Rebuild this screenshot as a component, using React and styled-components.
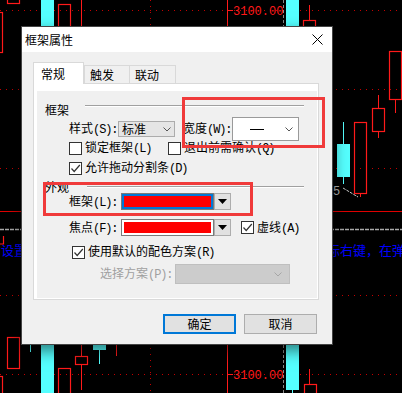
import React from "react";
import styled, { createGlobalStyle } from "styled-components";

const GlobalStyle = createGlobalStyle`
  html, body {
    margin: 0;
    padding: 0;
    background: #000;
  }
`;

const RED = "#ff1a1a";
const CYAN = "#55ffff";
const DOT = "#c40000";
const MARK = "#f03a3a";

const Screen = styled.div`
  position: relative;
  width: 402px;
  height: 393px;
  overflow: hidden;
  background: #000;
`;

const Canvas = styled.svg`
  position: absolute;
  left: 0;
  top: 0;
  display: block;
`;

// chart pieces: [x, y, w, h] / [x, y1, y2]
const redBoxes = [
  [-10, 12, 12, 40],
  [7, -5, 12, 8],
  [58, 4, 12, 60],
  [303, 20, 12, 20],
  [354, 122, 12, 71],
  [372, 108, 12, 23],
  [389, 51, 12, 48],
  [7, 337, 12, 31],
  [-10, 376, 12, 30],
  [58, 368, 12, 40],
  [75, 356, 12, 8],
  [304, 384, 12, 20],
];
const redWicks = [
  [81, 0, 30],
  [309, 5, 20],
  [360, 193, 197],
  [378, 95, 108],
  [378, 131, 138],
  [395, 99, 113],
  [81, 340, 356],
  [81, 364, 390],
  [116, 340, 356],
  [309, 369, 384],
];
const cyanBars = [
  [41, 0, 13, 393],
  [286, 0, 13, 390],
  [337, 144, 13, 33],
  [93, 340, 13, 10],
];
const cyanWicks = [
  [343, 122, 144],
  [343, 177, 184],
  [99, 350, 364],
  [30, 340, 352],
  [292, 390, 393],
];

const Chart = () => (
  <Canvas width="402" height="393" viewBox="0 0 402 393">
    {[10, 89, 168, 295, 374].map((y) => (
      <line key={y} x1="0" x2="402" y1={y + 0.5} y2={y + 0.5} stroke={DOT} strokeDasharray="1 5" />
    ))}
    <line x1="150.5" x2="150.5" y1="0" y2="393" stroke={DOT} strokeDasharray="1 5" />
    <line x1="0" x2="402" y1="211.5" y2="211.5" stroke="#e00000" />
    <line x1="0" x2="402" y1="229.5" y2="229.5" stroke="#a8a8a8" strokeWidth="1.5" strokeDasharray="4 1" />
    <line x1="283.5" x2="283.5" y1="0" y2="393" stroke="#8a8a8a" strokeDasharray="3 2" />
    <line x1="227.5" x2="227.5" y1="0" y2="393" stroke={RED} />
    <line x1="227" x2="233" y1="10.5" y2="10.5" stroke={RED} />
    <line x1="227" x2="233" y1="374.5" y2="374.5" stroke={RED} />
    <text x="233" y="15" fill={RED} fontFamily="Liberation Mono, monospace" fontSize="12">3100.00</text>
    <text x="233" y="379" fill={RED} fontFamily="Liberation Mono, monospace" fontSize="12">3100.00</text>

    {cyanBars.map(([x, y, w, h], i) => (
      <rect key={"c" + i} x={x} y={y} width={w} height={h} fill={CYAN} />
    ))}
    {cyanWicks.map(([x, y1, y2], i) => (
      <line key={"cw" + i} x1={x + 0.5} x2={x + 0.5} y1={y1} y2={y2} stroke={CYAN} />
    ))}
    {redBoxes.map(([x, y, w, h], i) => (
      <rect key={"r" + i} x={x + 0.5} y={y + 0.5} width={w} height={h} fill="none" stroke={RED} strokeWidth="1.2" />
    ))}
    {redWicks.map(([x, y1, y2], i) => (
      <line key={"rw" + i} x1={x + 0.5} x2={x + 0.5} y1={y1} y2={y2} stroke={RED} />
    ))}

    <text x="333" y="195" fill="#b0b0b0" fontFamily="Liberation Mono, monospace" fontSize="12">5</text>
    <line x1="343" y1="188" x2="358" y2="197" stroke="#c8c8c8" strokeDasharray="3 1" />
    <path d="M3.5 236 V244 H0" fill="none" stroke={RED} strokeWidth="1.2" />
    <text x="1" y="255" fill="#0000ff" fontFamily="Noto Sans CJK SC, sans-serif" fontSize="13">设置</text>
    <text x="327" y="255" fill="#0000ff" fontFamily="Noto Sans CJK SC, sans-serif" fontSize="13">标右键，在弹</text>
  </Canvas>
);

/* ---------- dialog ---------- */

const Dialog = styled.div`
  position: absolute;
  left: 21px;
  top: 26px;
  width: 312px;
  height: 319px;
  box-sizing: border-box;
  border: 1px solid #444;
  background: #f0f0f0;
  box-shadow: 0 6px 14px rgba(0, 0, 0, 0.5);
  display: flex;
  flex-direction: column;
  font-family: "Noto Sans CJK SC", "Liberation Sans", sans-serif;
  font-size: 12px;
  line-height: 14px;
  color: #000;
`;

const TitleBar = styled.div`
  height: 25px;
  flex: none;
  background: #fff;
  display: flex;
  align-items: center;
  justify-content: space-between;
  padding: 0 9px 0 3px;
`;

const Title = styled.span`
  font-size: 12px;
`;

const Body = styled.div`
  flex: 1;
  display: flex;
  flex-direction: column;
  padding: 10px 13px 0 11px;
`;

const TabRow = styled.div`
  height: 21px;
  display: flex;
  align-items: flex-end;
`;

const Tab = styled.div`
  box-sizing: border-box;
  position: relative;
  z-index: ${(p) => (p.$active ? 1 : 0)};
  width: ${(p) => p.$w}px;
  height: ${(p) => (p.$active ? 22 : 18)}px;
  margin-bottom: ${(p) => (p.$active ? -1 : 0)}px;
  margin-left: ${(p) => (p.$overlap ? -1 : 0)}px;
  padding-left: ${(p) => (p.$active ? 7 : 5)}px;
  border: 1px solid #d9d9d9;
  border-bottom: none;
  background: ${(p) => (p.$active ? "#fff" : "#f0f0f0")};
  display: flex;
  align-items: center;
`;

const Panel = styled.div`
  box-sizing: border-box;
  height: 217px;
  border: 1px solid #d9d9d9;
  background: #fff;
  padding: 7px 1px 1px 3px;
  display: flex;
`;

const Page = styled.div`
  flex: 1;
  background: #f0f0f0;
  padding-top: 13px;
  display: flex;
  flex-direction: column;
`;

const Group = styled.div`
  display: flex;
  align-items: flex-start;
  height: ${(p) => p.$h}px;
  margin-top: ${(p) => p.$mt || 0}px;
  padding-left: 8px;
  line-height: 12px;
`;

const Rule = styled.div`
  flex: 1;
  height: 1px;
  margin: ${(p) => p.$top}px 13px 0 ${(p) => p.$left}px;
  background: #a0a0a0;
  border-bottom: 1px solid #fff;
`;

const Row = styled.div`
  display: flex;
  align-items: center;
  height: ${(p) => p.$h}px;
  margin-top: ${(p) => p.$mt || 0}px;
  padding-left: ${(p) => p.$pl || 32}px;
  white-space: nowrap;
`;

const Label = styled.span`
  flex: none;
  width: ${(p) => p.$w}px;
  margin-left: ${(p) => p.$ml || 0}px;
  color: ${(p) => (p.$disabled ? "#a0a0a0" : "#000")};
`;

const Key = styled.span`
  font-family: "Liberation Mono", monospace;
  font-size: 12px;
  letter-spacing: -1.1px;
`;

const Select = styled.div`
  flex: none;
  box-sizing: border-box;
  width: ${(p) => p.$w}px;
  height: ${(p) => p.$h}px;
  display: flex;
  align-items: center;
  justify-content: space-between;
  padding: 0 ${(p) => p.$pr}px 0 ${(p) => p.$pl}px;
  background: ${(p) => p.$bg};
  border: 1px solid ${(p) => p.$line};
`;

const Dash = styled.div`
  width: 14px;
  height: 1px;
  background: #000;
`;

const CheckItem = styled.label`
  flex: none;
  display: flex;
  align-items: center;
  gap: 3px;
  width: ${(p) => (p.$w ? p.$w + "px" : "auto")};
  margin-left: ${(p) => p.$ml || 0}px;
`;

const Box = styled.span`
  box-sizing: border-box;
  width: 13px;
  height: 13px;
  border: 1px solid #333;
  background: #fff;
  display: flex;
  align-items: center;
  justify-content: center;
`;

const Swatch = styled.div`
  flex: none;
  box-sizing: border-box;
  width: 93px;
  height: 17px;
  border: 1px solid #7a7a7a;
  background: #fff;
  display: flex;
`;

const SwatchFill = styled.div`
  flex: 1;
  background: #ff0000;
  border: 2px solid ${(p) => (p.$focus ? "#0078d7" : "#fff")};
`;

const DropButton = styled.div`
  flex: none;
  box-sizing: border-box;
  width: 17px;
  height: 17px;
  background: #e1e1e1;
  border: 1px solid #adadad;
  display: flex;
  align-items: center;
  justify-content: center;
`;

const Buttons = styled.div`
  display: flex;
  justify-content: flex-end;
  gap: 8px;
  margin-top: 14px;
  padding-right: 2px;
`;

const Button = styled.div`
  box-sizing: border-box;
  width: 73px;
  height: 20px;
  display: flex;
  align-items: center;
  justify-content: center;
  background: #e1e1e1;
  border: ${(p) => (p.$default ? "2px solid #0078d7" : "1px solid #adadad")};
`;

const Highlight = styled.div`
  position: absolute;
  left: ${(p) => p.$x}px;
  top: ${(p) => p.$y}px;
  width: ${(p) => p.$w}px;
  height: ${(p) => p.$h}px;
  box-sizing: border-box;
  border: 3px solid ${MARK};
`;

const Chevron = ({ color = "#555" }) => (
  <svg width="8" height="5" viewBox="0 0 8 5">
    <polyline points="0.5,0.5 4,4 7.5,0.5" fill="none" stroke={color} strokeWidth="1" />
  </svg>
);

const Tick = () => (
  <svg width="11" height="11" viewBox="0 0 11 11">
    <polyline points="1.5,5.5 4.2,8.5 9.8,2" fill="none" stroke="#333" strokeWidth="1.2" />
  </svg>
);

const Triangle = () => (
  <svg width="9" height="5" viewBox="0 0 9 5">
    <polygon points="0,0 9,0 4.5,5" fill="#000" />
  </svg>
);

const CloseIcon = () => (
  <svg width="11" height="11" viewBox="0 0 11 11">
    <path d="M0.5 0.5 L10.5 10.5 M10.5 0.5 L0.5 10.5" stroke="#000" strokeWidth="1" />
  </svg>
);

const T = ({ t, k, colon }) => (
  <>
    {t}
    <Key>
      ({k}){colon ? ":" : ""}
    </Key>
  </>
);

const Check = ({ checked, w, ml, children }) => (
  <CheckItem $w={w} $ml={ml}>
    <Box>{checked && <Tick />}</Box>
    <span>{children}</span>
  </CheckItem>
);

const ColorPick = ({ focus }) => (
  <>
    <Swatch>
      <SwatchFill $focus={focus} />
    </Swatch>
    <DropButton>
      <Triangle />
    </DropButton>
  </>
);

export default function App() {
  return (
    <Screen>
      <GlobalStyle />
      <Chart />
      <Dialog>
        <TitleBar>
          <Title>框架属性</Title>
          <CloseIcon />
        </TitleBar>
        <Body>
          <TabRow>
            <Tab $active $w={51}>常规</Tab>
            <Tab $w={46}>触发</Tab>
            <Tab $w={47} $overlap>联动</Tab>
          </TabRow>
          <Panel>
            <Page>
              <Group $h={13}>
                框架
                <Rule $top={1} $left={16} />
              </Group>
              <Row $h={24}>
                <Label $w={49}><T t="样式" k="S" colon /></Label>
                <Select $w={57} $h={16} $pl={3} $pr={3} $bg="#e5e5e5" $line="#acacac">
                  标准
                  <Chevron />
                </Select>
                <Label $w={49} $ml={8}><T t="宽度" k="W" colon /></Label>
                <Select $w={67} $h={24} $pl={17} $pr={5} $bg="#fff" $line="#9a9a9a">
                  <Dash />
                  <Chevron />
                </Select>
              </Row>
              <Row $h={14}>
                <Check w={99}><T t="锁定框架" k="L" /></Check>
                <Check><T t="退出前需确认" k="Q" /></Check>
              </Row>
              <Row $h={14} $mt={6}>
                <Check checked><T t="允许拖动分割条" k="D" /></Check>
              </Row>
              <Group $h={12} $mt={6}>
                外观
                <Rule $top={5} $left={18} />
              </Group>
              <Row $h={17}>
                <Label $w={52}><T t="框架" k="L" colon /></Label>
                <ColorPick focus />
              </Row>
              <Row $h={17} $mt={9}>
                <Label $w={52}><T t="焦点" k="F" colon /></Label>
                <ColorPick />
                <Check checked ml={10}><T t="虚线" k="A" /></Check>
              </Row>
              <Row $h={14} $mt={9} $pl={35}>
                <Check checked><T t="使用默认的配色方案" k="R" /></Check>
              </Row>
              <Row $h={20} $mt={5} $pl={63}>
                <Label $w={75} $disabled><T t="选择方案" k="P" colon /></Label>
                <Select $w={115} $h={20} $pl={3} $pr={7} $bg="#cccccc" $line="#bfbfbf">
                  <span />
                  <Chevron color="#a6a6a6" />
                </Select>
              </Row>
            </Page>
          </Panel>
          <Buttons>
            <Button $default>确定</Button>
            <Button>取消</Button>
          </Buttons>
        </Body>
      </Dialog>
      <Highlight $x={182} $y={97} $w={143} $h={51} />
      <Highlight $x={43} $y={182} $w={210} $h={34} />
    </Screen>
  );
}
